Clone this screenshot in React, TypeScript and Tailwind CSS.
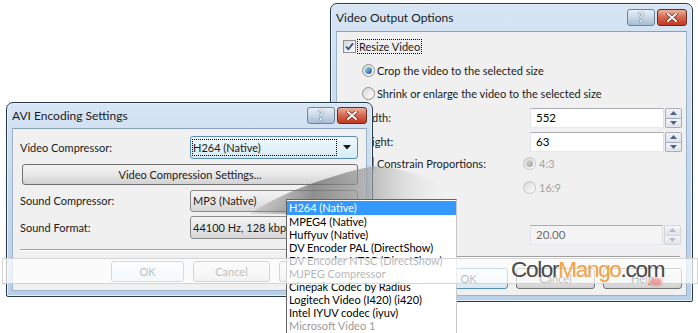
import React from "react";

const F = "font-[Lato,'Noto_Sans',sans-serif]";

function Check() {
  return (
    <svg width="9" height="9" viewBox="0 0 9 9">
      <path d="M1 4.6 L3.4 7.2 L8 1.4" stroke="#2f4f8f" strokeWidth="1.8" fill="none" />
    </svg>
  );
}

function CheckBox({ checked }: { checked?: boolean }) {
  return (
    <div className="w-[13px] h-[13px] border border-[#8e8f8f] bg-linear-to-br from-[#d6d6d6] to-white flex items-center justify-center shrink-0">
      {checked && <Check />}
    </div>
  );
}

function Radio({ checked, disabled }: { checked?: boolean; disabled?: boolean }) {
  return (
    <div
      className={`w-[13px] h-[13px] rounded-full border ${
        disabled ? "border-[#c4c4c4]" : "border-[#8e8f8f]"
      } bg-linear-to-br from-[#d8d8d8] to-white flex items-center justify-center shrink-0`}
    >
      {checked && (
        <div
          className={`w-[7px] h-[7px] rounded-full ${
            disabled ? "bg-linear-to-br from-[#e0e0e0] to-[#9a9a9a]" : "bg-linear-to-br from-[#9ee0fb] to-[#15548f]"
          }`}
        />
      )}
    </div>
  );
}

function Spin({ disabled }: { disabled?: boolean }) {
  const fill = disabled ? "#b8bcc4" : "#4d6185";
  const cls = `flex-1 border ${
    disabled ? "border-[#d4d6da]" : "border-[#a7adb8]"
  } bg-linear-to-b from-[#f4f6fa] to-[#dde3ec] flex items-center justify-center`;
  return (
    <div className="flex flex-col w-[17px] h-[20px] ml-[1px]">
      <div className={`${cls} rounded-t-[2px]`}>
        <svg width="7" height="4" viewBox="0 0 7 4">
          <path d="M0 4 L3.5 0 L7 4Z" fill={fill} />
        </svg>
      </div>
      <div className={`${cls} rounded-b-[2px] border-t-0`}>
        <svg width="7" height="4" viewBox="0 0 7 4">
          <path d="M0 0 L3.5 4 L7 0Z" fill={fill} />
        </svg>
      </div>
    </div>
  );
}

function TextBox({ value, disabled, w }: { value: string; disabled?: boolean; w: string }) {
  return (
    <div className="flex items-center">
      <div
        className={`${w} h-[20px] border border-[#abadb3] border-l-[#e2e3ea] border-r-[#dbdfe6] border-b-[#e3e9ef] ${
          disabled ? "bg-[#f4f4f4] text-[#6d6d6d]" : "bg-white text-black"
        } text-[11.5px] pl-[5px] flex items-center`}
      >
        {value}
      </div>
      <Spin disabled={disabled} />
    </div>
  );
}

function Btn({ children, w, blue }: { children: React.ReactNode; w: string; blue?: boolean }) {
  return (
    <div
      className={`${w} h-[21px] rounded-[3px] border ${
        blue ? "border-[#4f8cbc] from-[#f3f8fc] to-[#dbe8f2]" : "border-[#707070] from-[#f4f4f4] via-[#e8e8e8] to-[#d2d2d2]"
      } bg-linear-to-b flex items-center justify-center text-[11px] text-[#222]`}
    >
      {children}
    </div>
  );
}

function Arrow() {
  return (
    <svg width="8" height="5" viewBox="0 0 8 5">
      <path d="M0 0 L4 4.5 L8 0Z" fill="#1a1a1a" />
    </svg>
  );
}

function Combo({ value, focus, h }: { value: string; focus?: boolean; h: string }) {
  return (
    <div
      className={`w-[168px] ${h} rounded-[3px] border ${
        focus ? "border-[#5a8fb8] from-[#f0f7fc] to-[#d6ebf7]" : "border-[#8a8a8a] from-[#f4f4f4] via-[#e8e8e8] to-[#d6d6d6]"
      } bg-linear-to-b flex items-center pl-[1px] pr-[6px] text-[11px]`}
    >
      <div
        className={`flex-1 h-[17px] flex items-center ${
          focus ? "border border-dotted border-black" : "border border-transparent"
        } whitespace-nowrap`}
      >
        {value}
      </div>
      <div className="w-[14px] flex justify-end">
        <Arrow />
      </div>
    </div>
  );
}

function TitleButtons() {
  return (
    <div className="flex gap-[2px]">
      <div className="w-[28px] h-[17px] rounded-[3px] border border-[#6f8397] bg-linear-to-b from-[#e8eff7] via-[#c9d8e8] to-[#a6bdd6] flex items-center justify-center">
        <span className="text-[13px] font-bold leading-none text-white [text-shadow:0_0_1px_#3d5068,0_0_1px_#3d5068]">?</span>
      </div>
      <div className="w-[30px] h-[17px] rounded-[3px] border border-[#6b2a1f] bg-linear-to-b from-[#eab0a0] via-[#d5664d] to-[#c0391f] flex items-center justify-center">
        <svg width="12" height="9" viewBox="0 0 12 9">
          <path d="M2 1 L10 8 M10 1 L2 8" stroke="#5a1c12" strokeWidth="3.2" strokeLinecap="round" />
          <path d="M2 1 L10 8 M10 1 L2 8" stroke="#ffffff" strokeWidth="2" strokeLinecap="round" />
        </svg>
      </div>
    </div>
  );
}

function Win({
  title,
  className,
  barH,
  children,
}: {
  title: string;
  className: string;
  barH: string;
  children: React.ReactNode;
}) {
  return (
    <div
      className={`absolute rounded-t-[7px] rounded-b-[2px] border border-[#26394d] bg-linear-to-b from-[#d7e5f4] via-[#c5d8ec] to-[#b8cfe8] shadow-[inset_0_0_0_1px_#e8f1fa] flex flex-col ${className}`}
    >
      <div className={`${barH} shrink-0 flex items-center justify-between pl-[5px] pr-[5px]`}>
        <span className="text-[12px] text-[#1b1b1b]">{title}</span>
        <TitleButtons />
      </div>
      <div className="flex-1 mx-[5px] mb-[5px] bg-[#f0f0f0] border border-[#9db3ca] border-t-[#8aa2bb] flex flex-col overflow-hidden">
        {children}
      </div>
    </div>
  );
}

const items: { t: string; sel?: boolean; dim?: boolean }[] = [
  { t: "H264 (Native)", sel: true },
  { t: "MPEG4 (Native)" },
  { t: "Huffyuv (Native)" },
  { t: "DV Encoder PAL (DirectShow)" },
  { t: "DV Encoder NTSC (DirectShow)" },
  { t: "MJPEG Compressor" },
  { t: "Cinepak Codec by Radius" },
  { t: "Logitech Video (I420) (i420)" },
  { t: "Intel IYUV codec (iyuv)" },
  { t: "Microsoft Video 1", dim: true },
];

export default function App() {
  return (
    <div className={`relative w-[698px] h-[333px] bg-white overflow-hidden text-[#1a1a1a] leading-[14px] ${F}`}>
      {/* Right window */}
      <Win title="Video Output Options" className="left-[330px] top-[3px] w-[363px] h-[299px]" barH="h-[27px]">
        <div className="flex items-center h-[13px] mt-[8px] pl-[6px] text-[11px]">
          <CheckBox checked />
          <span className="ml-[1px] px-[1px] border border-dotted border-black leading-[13px]">Resize Video</span>
        </div>
        <div className="flex items-center h-[13px] mt-[11px] pl-[25px] text-[11px]">
          <Radio checked />
          <span className="ml-[2px]">Crop the video to the selected size</span>
        </div>
        <div className="flex items-center h-[13px] mt-[10px] pl-[25px] text-[11px]">
          <Radio />
          <span className="ml-[2px]">Shrink or enlarge the video to the selected size</span>
        </div>
        <div className="flex items-center h-[20px] mt-[8px] pl-[21px] text-[11px]">
          <span className="w-[172px]">Width:</span>
          <TextBox value="552" w="w-[134px]" />
        </div>
        <div className="flex items-center h-[20px] mt-[4px] pl-[21px] text-[11px]">
          <span className="w-[172px]">Height:</span>
          <TextBox value="63" w="w-[134px]" />
        </div>
        <div className="flex items-center h-[13px] mt-[5px] pl-[24px] text-[11px]">
          <div className="w-[162px] flex items-center">
            <CheckBox />
            <span className="ml-[3px]">Constrain Proportions:</span>
          </div>
          <Radio checked disabled />
          <span className="ml-[3px] text-[#a3a3a3]">4:3</span>
        </div>
        <div className="flex items-center h-[13px] mt-[11px] pl-[186px] text-[11px]">
          <Radio disabled />
          <span className="ml-[3px] text-[#a3a3a3]">16:9</span>
        </div>
        <div className="flex items-center h-[20px] mt-[31px] pl-[193px]">
          <TextBox value="20.00" w="w-[133px]" disabled />
        </div>
        <div className="mt-[11px] mx-[6px] h-[2px] shrink-0 border-t border-[#a0a0a0] border-b border-b-white" />
        <div className="flex justify-end gap-[8px] mt-[10px] pr-[4px]">
          <Btn w="w-[79px]" blue>OK</Btn>
          <Btn w="w-[79px]">Cancel</Btn>
          <Btn w="w-[79px]">Help</Btn>
        </div>
      </Win>

      {/* Left window */}
      <Win title="AVI Encoding Settings" className="left-[6px] top-[102px] w-[367px] h-[195px]" barH="h-[25px]">
        <div className="flex flex-col pt-[7px] pl-[7px] text-[11px]">
          <div className="flex items-center h-[23px]">
            <span className="w-[170px]">Video Compressor:</span>
            <Combo value="H264 (Native)" focus h="h-[23px]" />
          </div>
          <div className="mt-[5px] ml-[2px]">
            <Btn w="w-[336px]">Video Compression Settings...</Btn>
          </div>
          <div className="flex items-center h-[22px] mt-[5px]">
            <span className="w-[170px]">Sound Compressor:</span>
            <Combo value="MP3 (Native)" h="h-[22px]" />
          </div>
          <div className="flex items-center h-[23px] mt-[4px]">
            <span className="w-[170px]">Sound Format:</span>
            <Combo value="44100 Hz, 128 kbps" h="h-[23px]" />
          </div>
          <div className="mt-[10px] mr-[6px] h-[2px] border-t border-[#a0a0a0] border-b border-b-white" />
          <div className="flex gap-[9px] mt-[10px] pl-[91px]">
            <Btn w="w-[73px]" blue>OK</Btn>
            <Btn w="w-[77px]">Cancel</Btn>
            <Btn w="w-[77px]">Help</Btn>
          </div>
        </div>
      </Win>

      {/* callout shading */}
      <svg className="absolute left-0 top-0 pointer-events-none" width="698" height="333" viewBox="0 0 698 333">
        <defs>
          <linearGradient id="sh" x1="250" y1="0" x2="460" y2="0" gradientUnits="userSpaceOnUse">
            <stop offset="0" stopColor="#7a7a7a" stopOpacity="0.15" />
            <stop offset="0.3" stopColor="#6e6e6e" stopOpacity="0.75" />
            <stop offset="0.55" stopColor="#9a9a9a" stopOpacity="0.7" />
            <stop offset="1" stopColor="#ffffff" stopOpacity="0" />
          </linearGradient>
        </defs>
        <path d="M250 214 C272 198 318 178 373 166 C412 168 444 184 460 200 L286 200 L286 214 Z" fill="url(#sh)" />
      </svg>

      {/* Dropdown list */}
      <div className="absolute left-[286px] top-[199px] w-[171px] h-[136px] bg-white border border-[#646464] border-r-[#c8c8c8] pt-[1px] text-[11px] leading-[13px]">
        {items.map((it) => (
          <div
            key={it.t}
            className={`h-[13px] pl-[2px] whitespace-nowrap ${
              it.sel ? "bg-[#3399ff] text-white h-[14px] leading-[14px]" : it.dim ? "text-[#9a9a9a]" : "text-black"
            }`}
          >
            {it.t}
          </div>
        ))}
      </div>

      {/* watermark band */}
      <div className="absolute left-[2px] right-0 top-[258px] h-[26px] bg-white/70 border border-[#d4d4d4]" />
      <div className="absolute left-[511px] top-[255px] text-[22.5px] tracking-[-1.3px] font-['Liberation_Sans',Arial,sans-serif] leading-[30px]">
        <span className="text-[#4a4a4a]">Color</span>
        <span className="text-[#f4a043]">Mango</span>
        <span className="text-[#4a4a4a]">.com</span>
      </div>
      <div className="absolute left-[650px] top-[278px] w-[12px] h-[8px] rounded-full bg-[#e88080]/70 blur-[1px]" />
    </div>
  );
}
